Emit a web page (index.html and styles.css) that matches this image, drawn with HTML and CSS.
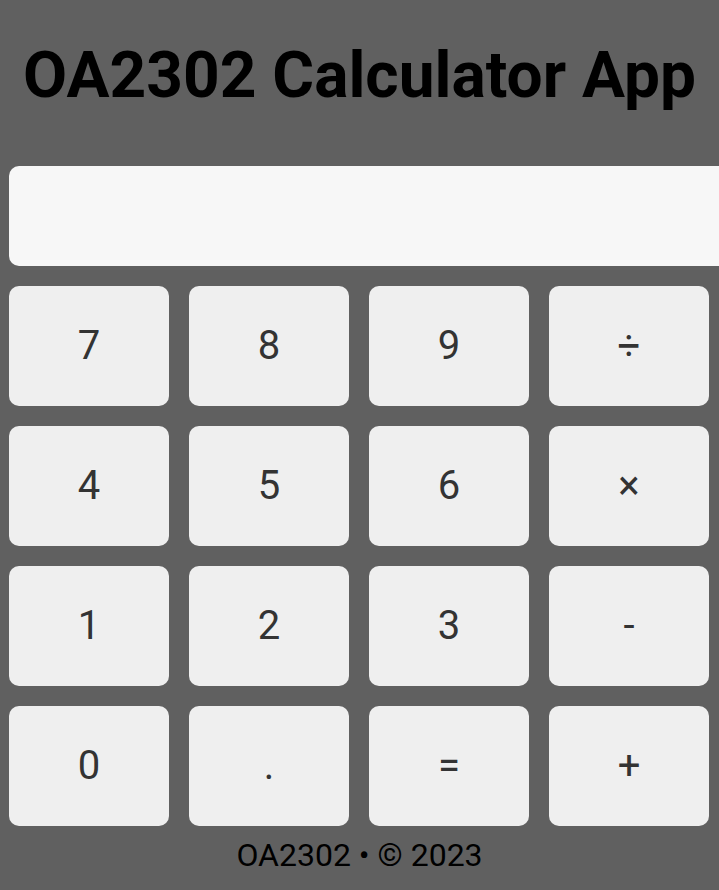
FILE: index.html
```html
<!DOCTYPE html>
<html>
<head>
<meta charset="utf-8">
<link rel="stylesheet" href="styles.css">
</head>
<body>
<h1 class="title">OA2302 Calculator App</h1>
<div class="calc">
  <div class="display"></div>
  <div class="keys">
    <button class="key">7</button>
    <button class="key">8</button>
    <button class="key">9</button>
    <button class="key">÷</button>
    <button class="key">4</button>
    <button class="key">5</button>
    <button class="key">6</button>
    <button class="key">×</button>
    <button class="key">1</button>
    <button class="key">2</button>
    <button class="key">3</button>
    <button class="key">-</button>
    <button class="key">0</button>
    <button class="key">.</button>
    <button class="key">=</button>
    <button class="key">+</button>
  </div>
</div>
<footer class="footer">OA2302 • © 2023</footer>
</body>
</html>
```
FILE: styles.css
```css
html, body {
  margin: 0;
  padding: 0;
  background: #606060;
  font-family: Roboto, "Liberation Sans", sans-serif;
  overflow: hidden;
}
.title {
  margin: 0;
  padding-top: 38px;
  height: 128px;
  box-sizing: border-box;
  text-align: center;
  font-size: 64px;
  font-weight: 700;
  line-height: 75px;
  color: #000;
}
.calc {
  padding-left: 9px;
  width: 760px;
}
.display {
  height: 100px;
  background: #f7f7f7;
  border-radius: 10px;
  margin-top: 38px;
  width: 730px;
}
.keys {
  margin-top: 20px;
  display: grid;
  grid-template-columns: repeat(4, 160px);
  grid-auto-rows: 120px;
  gap: 20px;
}
.key {
  border: none;
  background: #efefef;
  border-radius: 10px;
  font-family: Roboto, "Liberation Sans", sans-serif;
  font-size: 40px;
  color: #333;
  padding: 0 0 2px;
}
.footer {
  text-align: center;
  font-size: 32px;
  line-height: 40px;
  color: #000;
  width: 719px;
  margin-top: 9px;
}
```
